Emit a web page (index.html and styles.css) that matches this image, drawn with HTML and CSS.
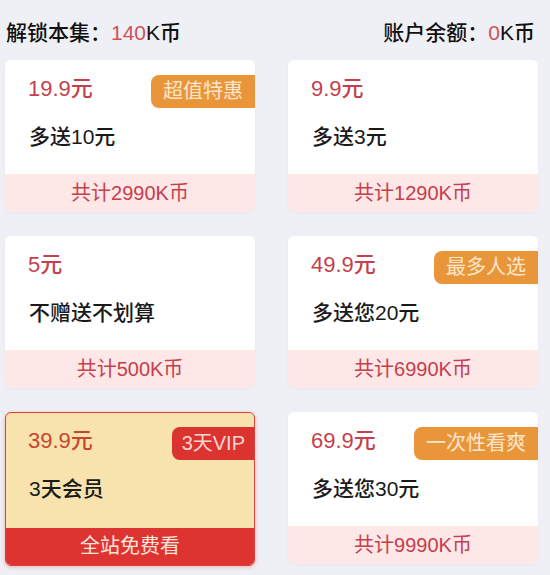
FILE: index.html
```html
<!DOCTYPE html>
<html lang="zh">
<head>
<meta charset="utf-8">
<link rel="stylesheet" href="styles.css">
</head>
<body>
<div class="page">
  <div class="header">
    <div class="hl">解锁本集：<span class="red">140</span>K币</div>
    <div class="hr">账户余额：<span class="red">0</span>K币</div>
  </div>
  <div class="grid">
    <div class="card">
      <div class="top">
        <div class="row"><span class="price">19.9元</span><span class="badge">超值特惠</span></div>
        <div class="title">多送10元</div>
      </div>
      <div class="foot">共计2990K币</div>
    </div>
    <div class="card">
      <div class="top">
        <div class="row"><span class="price">9.9元</span></div>
        <div class="title">多送3元</div>
      </div>
      <div class="foot">共计1290K币</div>
    </div>
    <div class="card">
      <div class="top">
        <div class="row"><span class="price">5元</span></div>
        <div class="title">不赠送不划算</div>
      </div>
      <div class="foot">共计500K币</div>
    </div>
    <div class="card">
      <div class="top">
        <div class="row"><span class="price">49.9元</span><span class="badge">最多人选</span></div>
        <div class="title">多送您20元</div>
      </div>
      <div class="foot">共计6990K币</div>
    </div>
    <div class="card vip">
      <div class="top">
        <div class="row"><span class="price">39.9元</span><span class="badge">3天VIP</span></div>
        <div class="title">3天会员</div>
      </div>
      <div class="foot">全站免费看</div>
    </div>
    <div class="card">
      <div class="top">
        <div class="row"><span class="price">69.9元</span><span class="badge">一次性看爽</span></div>
        <div class="title">多送您30元</div>
      </div>
      <div class="foot">共计9990K币</div>
    </div>
  </div>
</div>
</body>
</html>
```
FILE: styles.css
```css
html, body {
  margin: 0;
  padding: 0;
  background: #eff0f5;
  font-family: "Liberation Sans", "Noto Sans CJK SC", sans-serif;
}
.page {
  width: 550px;
  height: 575px;
  padding: 0 12px 0 5px;
  box-sizing: border-box;
  overflow: hidden;
}
.header {
  display: flex;
  justify-content: space-between;
  padding: 20px 3px 0 1px;
  height: 46px;
  box-sizing: border-box;
  font-size: 21px;
  line-height: 26px;
  color: #111;
  font-weight: 500;
}
.red { color: #d0505a; }
.grid {
  margin-top: 14px;
  display: grid;
  grid-template-columns: 250px 250px;
  column-gap: 33px;
  row-gap: 24px;
}
.card {
  height: 152px;
  background: #fff;
  border-radius: 6px;
  overflow: hidden;
  display: flex;
  flex-direction: column;
  box-shadow: 0 1px 3px rgba(0,0,0,0.04);
}
.top {
  flex: 1;
  padding: 15px 0 0 23px;
}
.row {
  display: flex;
  justify-content: space-between;
  align-items: center;
  height: 33px;
}
.price {
  font-size: 22px;
  line-height: 26px;
  padding-bottom: 6px;
  color: #c53f4c;
  font-weight: 500;
}
.badge {
  height: 33px;
  line-height: 33px;
  padding: 0 12px;
  font-size: 20px;
  color: #fde6cc;
  background: #e9963b;
  border-radius: 8px 0 0 8px;
}
.title {
  margin-top: 16px;
  padding-left: 1px;
  font-size: 21px;
  line-height: 26px;
  color: #1a1a1a;
  font-weight: 500;
}
.foot {
  height: 38px;
  line-height: 38px;
  text-align: center;
  font-size: 20px;
  color: #c5404c;
  background: #fde7e7;
}
.card.vip {
  background: #f8e2ad;
  border: 1px solid #d6453d;
  box-shadow: 0 1px 4px rgba(220,60,60,0.35);
}
.vip .top { padding-top: 14px; padding-left: 22px; }
.vip .price { color: #c8462f; }
.vip .badge {
  background: #db3330;
  color: #fbd6d0;
  padding: 0 10px;
  margin-right: -1px;
}
.vip .foot {
  background: #dd3431;
  color: #fde4dc;
  height: 37px;
  line-height: 37px;
}
```
